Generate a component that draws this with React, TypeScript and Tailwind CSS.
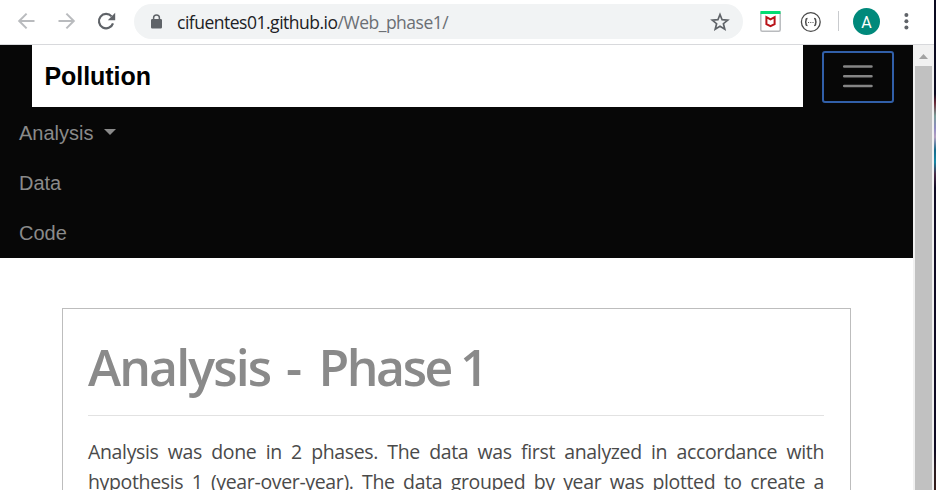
import React from "react";

const ui = "font-['Open_Sans','Noto_Sans',sans-serif]";
const arial = "font-['Liberation_Sans',Arial,sans-serif]";

function Toolbar() {
  return (
    <header className="flex h-[45px] shrink-0 items-start border-b border-[#d8d9dc] bg-white">
      <svg className="ml-[16px] mt-[11px] h-5 w-5 shrink-0" viewBox="0 0 20 20" fill="none" stroke="#b9bbbe" strokeWidth="2">
        <path d="M18.5 10H4M10.6 2.6L3.2 10l7.4 7.4" />
      </svg>
      <svg className="ml-[20px] mt-[11px] h-5 w-5 shrink-0" viewBox="0 0 20 20" fill="none" stroke="#b9bbbe" strokeWidth="2">
        <path d="M2.5 10H17M10.4 2.6l7.4 7.4-7.4 7.4" />
      </svg>
      <svg className="ml-[20px] mt-[11px] h-5 w-5 shrink-0" viewBox="0 0 20 20">
        <path d="M17 12.4A7.2 7.2 0 1 1 15.6 5.4" fill="none" stroke="#5f6368" strokeWidth="2.2" />
        <path d="M19.2 1.8v7.4h-7.4z" fill="#5f6368" />
      </svg>
      <div className="ml-[18px] mt-1 flex h-[35px] w-[609px] shrink-0 items-center rounded-full bg-[#f1f3f4] pl-[17px] pr-[13px]">
        <svg className="h-[15px] w-[11px] shrink-0" viewBox="0 0 11 15">
          <path d="M2.6 6V3.8a2.9 2.9 0 0 1 5.8 0V6" fill="none" stroke="#5f6368" strokeWidth="1.5" />
          <path d="M1.2 5h8.6Q11 5 11 6.2v7.1q0 1.2-1.2 1.2H1.2Q0 14.5 0 13.3V6.2Q0 5 1.2 5z" fill="#5f6368" />
        </svg>
        <div className={`${ui} ml-[15px] shrink-0 whitespace-nowrap text-[17.5px] leading-[24px] tracking-[-0.49px] text-[#202124]`}>
          <span>cifuentes01.github.io</span>
          <span className="text-[#6b6f74]">/Web_phase1/</span>
        </div>
        <svg className="ml-auto h-5 w-5 shrink-0" viewBox="0 0 20 20" fill="none" stroke="#5f6368" strokeWidth="1.7">
          <path d="M10 2.500l2.100 5.200 5.600.4-4.300 3.600 1.400 5.500L10 14.200l-4.800 3 1.400-5.500-4.300-3.600 5.600-.4z" />
        </svg>
      </div>
      <svg className="ml-[17px] mt-[11px] h-[21px] w-[21px] shrink-0" viewBox="0 0 21 21">
        <rect x="0.8" y="0.8" width="19.4" height="19.4" rx="1.5" fill="#fff" stroke="#b9bbbe" strokeWidth="1.5" />
        <path d="M.5 0h20v3H.5z" fill="#05dc72" />
        <path d="M6.400 6.200l4.100 2.200 4.100-2.200v6.900l-4.100 2.100-4.100-2.100z" fill="none" stroke="#b91319" strokeWidth="2" />
      </svg>
      <svg className="ml-[19px] mt-[11px] h-[22px] w-[22px] shrink-0" viewBox="0 0 22 22" fill="none" stroke="#4a4a4a">
        <circle cx="10.8" cy="11" r="9.4" strokeWidth="1.3" />
        <path d="M7.500 7.500q-1.500 0-1.500 1.300v1q0 1.200-1 1.200 1 0 1 1.200v1q0 1.300 1.500 1.300M14.100 7.500q1.500 0 1.500 1.300v1q0 1.200 1 1.200-1 0-1 1.200v1q0 1.300-1.500 1.300" strokeWidth="1.5" />
        <path d="M8.100 11.500h1M10.300 11.500h1M12.500 11.500h1" strokeWidth="1" />
      </svg>
      <div className="ml-[16px] mt-[11px] h-5 w-px shrink-0 bg-[#c9cbce]" />
      <div className="ml-[14px] mt-2 flex h-[27px] w-[27px] shrink-0 items-center justify-center rounded-full bg-[#00897b] font-[Roboto,sans-serif] text-[16px] leading-none text-white">
        <span className="pt-[2px]">A</span>
      </div>
      <svg className="ml-[22px] mt-[11px] h-[21px] w-[9px] shrink-0" viewBox="0 0 9 21" fill="#5f6368">
        <circle cx="4.4" cy="3.9" r="2" />
        <circle cx="4.4" cy="10.2" r="2" />
        <circle cx="4.4" cy="16.4" r="2" />
      </svg>
    </header>
  );
}

function Navbar() {
  return (
    <nav className={`${arial} h-[213px] bg-[#070707] text-[#8a8a8a]`}>
      <div className="flex h-[62px] pl-8">
        <div className="flex w-[771px] items-center bg-white pl-[12.5px] pt-[2px] text-[25px] font-bold tracking-[-0.06px] text-black">
          <span>Pollution</span>
        </div>
        <button aria-label="Toggle navigation" className="ml-[19px] mt-[6px] flex h-[52px] w-[72px] items-center justify-center rounded-[3px] border-2 border-[#315fa8]">
          <svg className="h-[38px] w-[38px]" viewBox="0 0 38 38" stroke="#858585" strokeWidth="2.5" strokeLinecap="round">
            <path d="M5.200 8.500h27.300M5.200 18.300h27.300M5.200 28h27.300" />
          </svg>
        </button>
      </div>
      <ul className="pl-[19px] pt-px text-[20px] leading-[50px]">
        <li className="flex h-[50px] items-center">
          <span>Analysis</span>
          <svg className="mb-[2px] ml-[11px] h-[6px] w-[12px]" viewBox="0 0 12 6" fill="#8a8a8a">
            <path d="M0 0h12L6 6z" />
          </svg>
        </li>
        <li className="h-[50px]"><span>Data</span></li>
        <li className="h-[50px]"><span>Code</span></li>
      </ul>
    </nav>
  );
}

function Article() {
  return (
    <main className={`${ui} ml-[62px] mt-[50px] h-[400px] w-[789px] border border-[#bdbdbd] pl-[25px] pr-[26px]`}>
      <h1 className="flex h-[107px] items-center whitespace-nowrap border-b border-[#e2e2e2] pt-[9px] text-[50px] font-semibold leading-[60px] tracking-[-1.85px] text-[#8a8a8a]">
        <span>
          <span className="[word-spacing:4.5px]">Analysis </span>
          <span className="[word-spacing:7px]">- </span>
          <span className="tracking-[-2.4px] [word-spacing:-1.500px]">Phase 1</span>
        </span>
      </h1>
      <div className="mt-[21px] whitespace-nowrap text-[19.5px] leading-[30px] tracking-[-0.35px] text-[#4a4a4a]">
        <p className="text-justify [text-align-last:justify]">Analysis was done in 2 phases. The data was first analyzed in accordance with</p>
        <p className="text-justify [text-align-last:justify]">hypothesis 1 (year-over-year). The data grouped by year was plotted to create a</p>
      </div>
    </main>
  );
}

function Scrollbar() {
  return (
    <aside className="flex w-[21px] shrink-0 flex-col items-center bg-[#f1f1f1]">
      <svg className="mt-[9px] h-[5px] w-[9px]" viewBox="0 0 9 5" fill="#a3a3a3">
        <path d="M4.500 0L9 5H0z" />
      </svg>
      <div className="mt-[7px] w-[17px] flex-1 bg-[#c1c1c1]" />
    </aside>
  );
}

export default function App() {
  return (
    <div className="flex h-[490px] w-[936px] overflow-hidden bg-white">
      <div className="flex w-[934px] shrink-0 flex-col">
        <Toolbar />
        <div className="flex h-[445px]">
          <div className="w-[913px] shrink-0 overflow-hidden bg-white">
            <Navbar />
            <Article />
          </div>
          <Scrollbar />
        </div>
      </div>
      <div className="w-[2px] bg-[linear-gradient(to_bottom,#0b0a20_0px,#0b0a20_94px,#6b2a38_103px,#7a9c98_116px,#8d8ac0_128px,#b39fc0_137px,#176b8c_150px,#1787a5_162px,#4a2c48_174px,#0f0b24_188px,#0f0b24_450px,#2c1c20_470px,#341c1a_490px)]" />
    </div>
  );
}
